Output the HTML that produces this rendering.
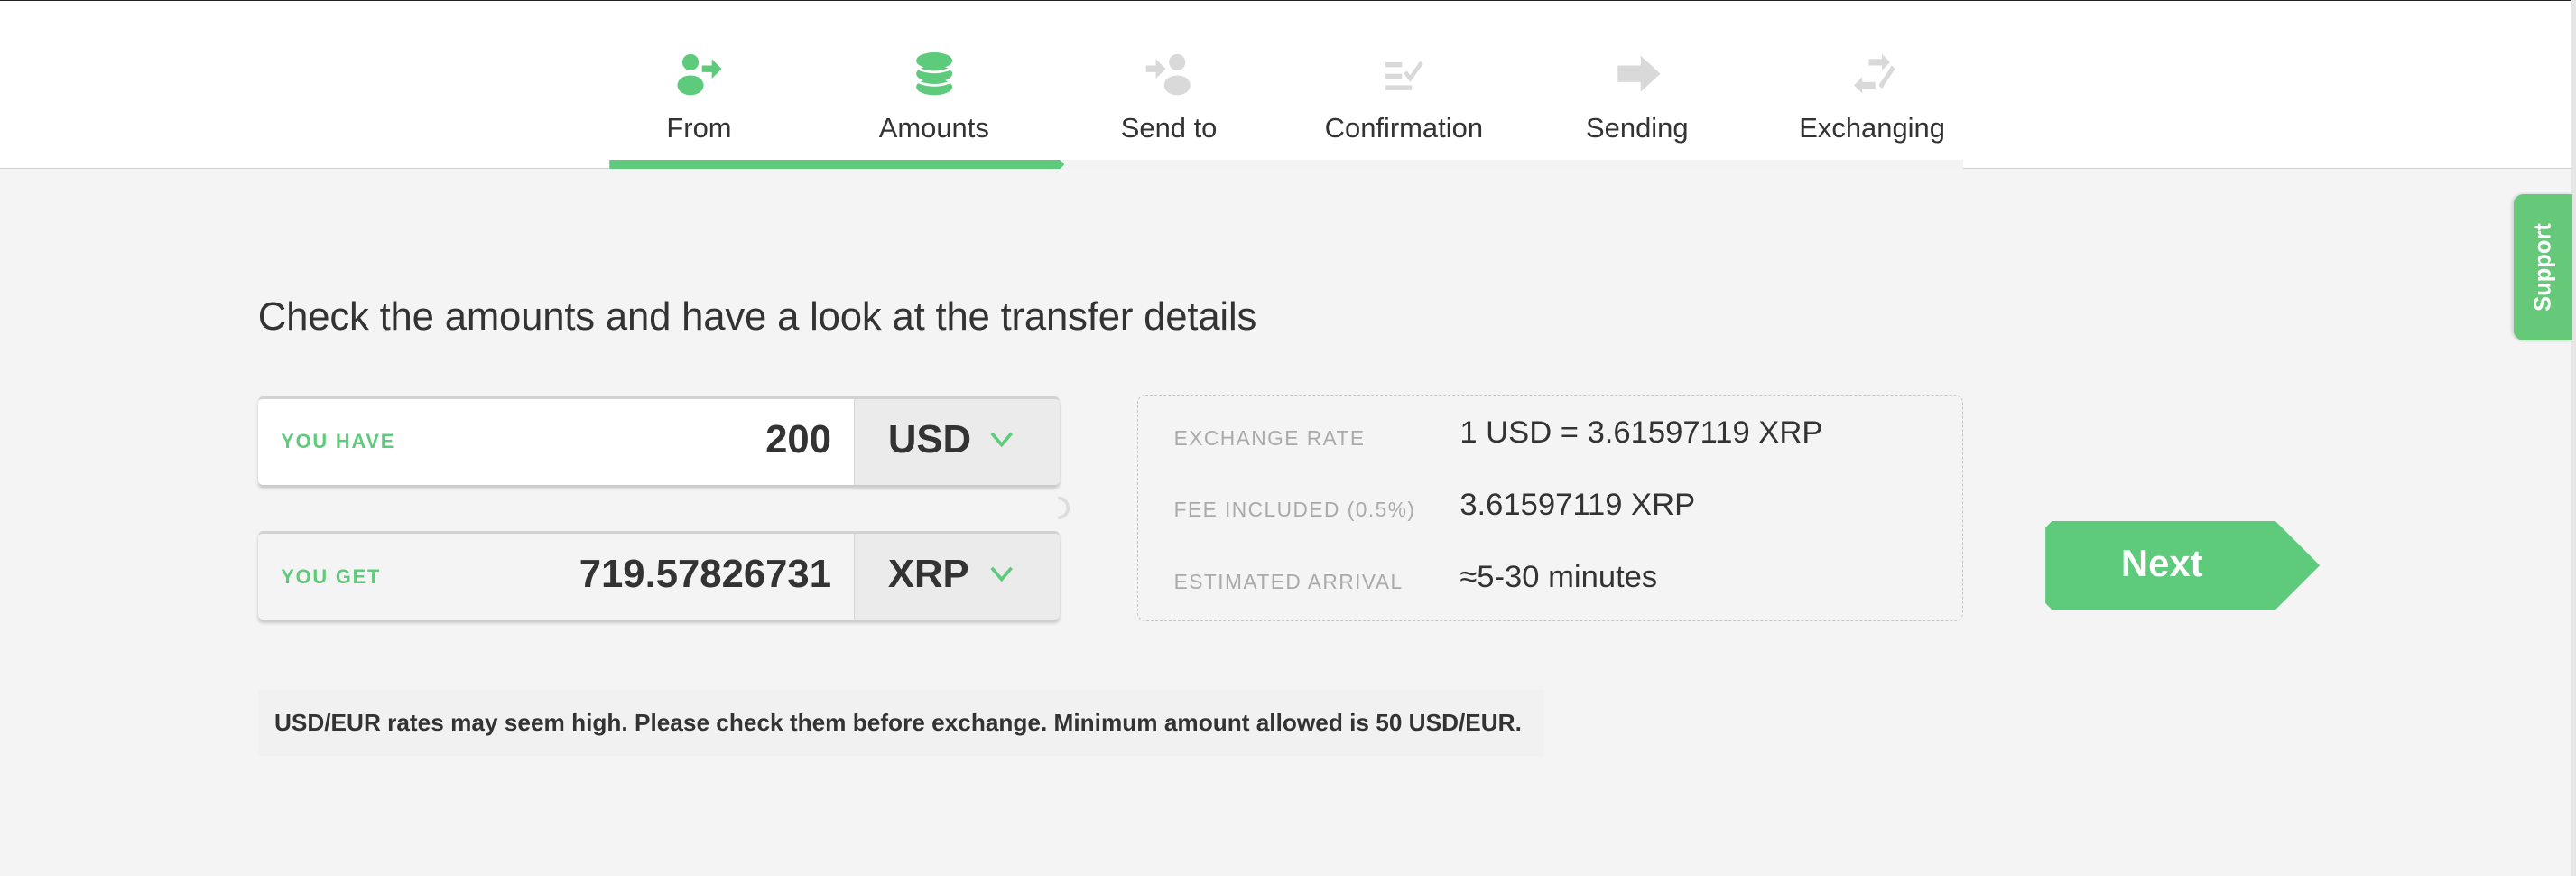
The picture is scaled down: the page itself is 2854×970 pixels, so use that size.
<!DOCTYPE html>
<html><head><meta charset="utf-8"><style>
html,body{margin:0;padding:0;width:2854px;height:970px;overflow:hidden;background:#f4f4f4;font-family:"Liberation Sans",sans-serif}
#w{zoom:1.8202;width:1568px;height:533px;position:relative;background:#f4f4f4;color:#333}
.hdr{position:absolute;left:0;top:0;width:1565px;height:103px;background:#fff;border-top:1px solid #222;box-sizing:border-box;border-bottom:1px solid #cfcfcf}
.sb{position:absolute;left:1565px;top:0;width:3px;height:533px;background:#e6e6e6}
.step{position:absolute;top:32px;width:143px;text-align:center;font-size:17px;color:#333}
.step svg{display:block;margin:0 auto 10px;width:32px;height:26px}
.track{position:absolute;left:371px;top:97px;width:824px;height:6px;background:#f3f3f3}
.prog{position:absolute;left:371px;top:97px;height:6px;width:277px;background:#5ecb7c;clip-path:polygon(0 0,274px 0,277px 50%,274px 100%,0 100%)}
h1{position:absolute;left:157px;top:179px;margin:0;font-weight:normal;font-size:24px;color:#333;letter-spacing:-0.1px}
.box{position:absolute;left:157px;width:488px;height:54px;border-top:2px solid #d2d2d2;box-shadow:0 2px 2px rgba(0,0,0,.18);box-sizing:border-box;border-radius:3px;overflow:hidden;background:#fff}
.box .l{position:absolute;left:0;top:0;width:363px;height:100%;}
.box .r{position:absolute;left:363px;top:0;right:0;height:100%;background:#ebebeb;border-left:1px solid #d5d5d5}
.lab{position:absolute;left:14px;top:19px;font-size:12px;font-weight:bold;color:#5ecb7c;letter-spacing:1px}
.val{position:absolute;right:14px;top:11px;font-size:24px;font-weight:bold;color:#333}
.cur{position:absolute;left:20px;top:11px;font-size:24px;font-weight:bold;color:#333}
.chev{position:absolute;left:82px;top:20px}
.det{position:absolute;left:692px;top:240px;width:503px;height:138px;border:1px dashed #c4c4c4;box-sizing:border-box;border-radius:5px}
.dl{position:absolute;left:22px;font-size:12.5px;color:#aaa;letter-spacing:.8px}
.dv{position:absolute;left:196px;font-size:19px;color:#333}
.next{position:absolute;left:1245px;top:317px;width:167px;height:54px;background:#5ecb7c;clip-path:polygon(4px 0,140px 0,167px 27px,140px 54px,4px 54px,0 50px,0 4px);border-radius:4px;color:#fff;font-weight:bold;font-size:23px;line-height:52px;text-indent:46px}
.sup{position:absolute;left:1530px;top:118px;width:36px;height:89px;background:#66c879;border-radius:6px 0 0 6px;box-shadow:-1px 0 2px rgba(0,0,0,.15)}
.sup span{position:absolute;left:50%;top:50%;transform:translate(-50%,-50%) rotate(-90deg);color:#fff;font-weight:bold;font-size:14px;white-space:nowrap}
.note{position:absolute;left:157px;top:420px;width:783px;height:40px;background:#f1f1f1;font-size:14.4px;font-weight:bold;color:#333;line-height:40px;text-indent:10px}
</style></head><body><div id="w">
<div class="hdr"></div><div class="sb"></div>
<div class="step" style="left:354px"><svg viewBox="0 0 32 26"><circle cx="11" cy="6" r="5" fill="#5ecb7c"/><ellipse cx="11" cy="20" rx="8" ry="6" fill="#5ecb7c"/><path d="M18 8h6v-4l6 6-6 6v-4h-6z" fill="#5ecb7c"/></svg>From</div>
<div class="step" style="left:497px"><svg viewBox="0 0 32 26"><ellipse cx="16" cy="5" rx="11" ry="5" fill="#5ecb7c"/><ellipse cx="16" cy="13" rx="11" ry="5" fill="#5ecb7c"/><ellipse cx="16" cy="21" rx="11" ry="5" fill="#5ecb7c"/><path d="M5 9.5q11 5 22 0M5 17.5q11 5 22 0" stroke="#fff" stroke-width="1.5" fill="none"/></svg>Amounts</div>
<div class="step" style="left:640px"><svg viewBox="0 0 32 26"><circle cx="21" cy="6" r="5" fill="#d9d9d9"/><ellipse cx="21" cy="20" rx="8" ry="6" fill="#d9d9d9"/><path d="M2 8h6v-4l6 6-6 6v-4h-6z" fill="#d9d9d9"/></svg>Send to</div>
<div class="step" style="left:783px"><svg viewBox="0 0 32 26"><path d="M5 6h10v3H5zM5 13h10v3H5zM5 20h16v3H5z" fill="#d9d9d9"/><path d="M17 12l3 4 7-10" stroke="#d9d9d9" stroke-width="2.5" fill="none"/></svg>Confirmation</div>
<div class="step" style="left:925px"><svg viewBox="0 0 32 26"><path d="M4 8h14v-6l12 11-12 11v-6H4z" fill="#d9d9d9"/></svg>Sending</div>
<div class="step" style="left:1068px"><svg viewBox="0 0 32 26"><path d="M14 4h8v-3l5 5-5 5v-3h-8zM18 22h-8v3l-5-5 5-5v3h8z" fill="#d9d9d9"/><path d="M20 20l8-12 2 2-8 12z" fill="#d9d9d9"/></svg>Exchanging</div>
<div class="track"></div><div class="prog"></div>
<div class="sup"><span>Support</span></div>
<h1>Check the amounts and have a look at the transfer details</h1>
<div class="box" style="top:241px"><div class="l"><div class="lab">YOU HAVE</div><div class="val">200</div></div><div class="r"><div class="cur">USD</div><svg class="chev" width="14" height="10"><path d="M1 1l6 7 6-7" stroke="#5ecb7c" stroke-width="2" fill="none"/></svg></div></div>
<svg style="position:absolute;left:640px;top:300px" width="14" height="18"><path d="M4 3a6 6 0 1 1 0 12" stroke="#ddd" stroke-width="2" fill="none"/></svg>
<div class="box" style="top:323px;background:#f4f4f4"><div class="l"><div class="lab">YOU GET</div><div class="val">719.57826731</div></div><div class="r"><div class="cur">XRP</div><svg class="chev" width="14" height="10"><path d="M1 1l6 7 6-7" stroke="#5ecb7c" stroke-width="2" fill="none"/></svg></div></div>
<div class="det">
<div class="dl" style="top:19px">EXCHANGE RATE</div><div class="dv" style="top:12px">1 USD = 3.61597119 XRP</div>
<div class="dl" style="top:62px">FEE INCLUDED (0.5%)</div><div class="dv" style="top:56px">3.61597119 XRP</div>
<div class="dl" style="top:106px">ESTIMATED ARRIVAL</div><div class="dv" style="top:100px">≈5-30 minutes</div>
</div>
<div class="next">Next</div>
<div class="note">USD/EUR rates may seem high. Please check them before exchange. Minimum amount allowed is 50 USD/EUR.</div>
</div></body></html>
